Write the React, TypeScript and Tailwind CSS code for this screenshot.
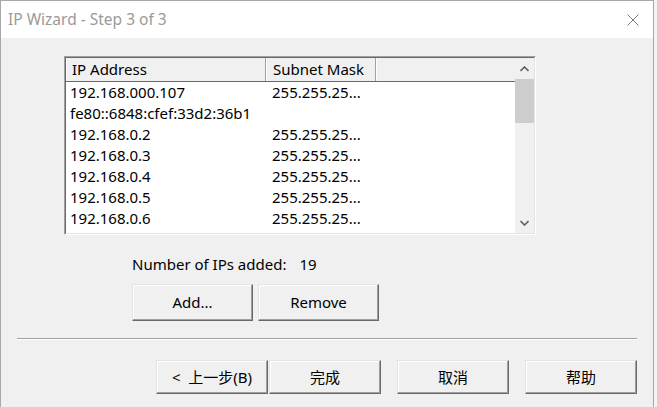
import React from "react";

const rows: [string, string][] = [
  ["192.168.000.107", "255.255.25..."],
  ["fe80::6848:cfef:33d2:36b1", ""],
  ["192.168.0.2", "255.255.25..."],
  ["192.168.0.3", "255.255.25..."],
  ["192.168.0.4", "255.255.25..."],
  ["192.168.0.5", "255.255.25..."],
  ["192.168.0.6", "255.255.25..."],
];

function Btn({ label, className = "" }: { label: string; className?: string }) {
  return (
    <div
      className={
        "flex items-center justify-center bg-[#f0f0f0] border border-t-[#e3e3e3] border-l-[#e3e3e3] border-b-[#696969] border-r-[#696969] shadow-[inset_-1px_-1px_0_#a0a0a0,inset_1px_1px_0_#ffffff] text-[15px] text-black whitespace-pre " +
        className
      }
    >
      {label}
    </div>
  );
}

export default function App() {
  return (
    <div
      className="w-[657px] h-[407px] flex bg-white overflow-hidden"
      style={{ fontFamily: '"Noto Sans", "Noto Sans CJK SC", sans-serif' }}
    >
      <div className="w-[654px] h-full flex flex-col border-l border-r border-t border-[#a8a8a8]">
        {/* title bar */}
        <div className="h-[37px] bg-white flex items-center justify-between pl-[7px] pr-[14px] shrink-0">
          <span className="text-[15.5px] text-[#9a9a9a] leading-none">IP Wizard - Step 3 of 3</span>
          <svg width="12" height="12" viewBox="0 0 12 12" className="mt-[1px]">
            <path d="M0.5 0.5 L11.5 11.5 M11.5 0.5 L0.5 11.5" stroke="#7a7a7a" strokeWidth="1" />
          </svg>
        </div>
        {/* body */}
        <div className="flex-1 bg-[#f0f0f0] flex flex-col">
          {/* list view */}
          <div className="mt-[18px] ml-[63px] w-[472px] h-[179px] shrink-0 border border-t-[#a0a0a0] border-l-[#a0a0a0] border-b-white border-r-white">
            <div className="w-full h-full border border-t-[#696969] border-l-[#696969] border-b-[#e3e3e3] border-r-[#e3e3e3] flex bg-white">
              <div className="flex-1 flex flex-col overflow-hidden">
                {/* header */}
                <div className="h-[24px] flex shrink-0 border-b border-[#696969] bg-[#f0f0f0] text-[15px] text-black">
                  <div className="w-[200px] border-r border-[#a0a0a0] border-l border-l-white flex items-center pl-[5px]">
                    IP Address
                  </div>
                  <div className="w-[110px] border-r border-[#a0a0a0] border-l border-l-white flex items-center pl-[6px]">
                    Subnet Mask
                  </div>
                  <div className="flex-1 border-l border-l-white" />
                </div>
                {rows.map(([ip, mask], i) => (
                  <div key={i} className="h-[21px] flex shrink-0 items-center text-[15px] text-black whitespace-nowrap">
                    <div className="w-[200px] pl-[4px]">{ip}</div>
                    <div className="w-[110px] pl-[6px]">{mask}</div>
                  </div>
                ))}
              </div>
              {/* scrollbar */}
              <div className="w-[19px] bg-[#f0f0f0] flex flex-col shrink-0">
                <div className="h-[21px] flex items-center justify-center">
                  <svg width="9" height="6" viewBox="0 0 9 6">
                    <path d="M0.5 5 L4.5 1 L8.5 5" stroke="#606060" strokeWidth="1.6" fill="none" />
                  </svg>
                </div>
                <div className="h-[44px] bg-[#cdcdcd]" />
                <div className="flex-1" />
                <div className="h-[21px] flex items-center justify-center">
                  <svg width="9" height="6" viewBox="0 0 9 6">
                    <path d="M0.5 1 L4.5 5 L8.5 1" stroke="#606060" strokeWidth="1.6" fill="none" />
                  </svg>
                </div>
              </div>
            </div>
          </div>
          {/* count */}
          <div className="mt-[19px] ml-[131px] h-[20px] flex items-center text-[15px] text-black">
            <span>Number of IPs added:</span>
            <span className="ml-[13px]">19</span>
          </div>
          {/* add/remove */}
          <div className="mt-[10px] ml-[131px] flex gap-[5px]">
            <Btn label="Add..." className="w-[121px] h-[37px]" />
            <Btn label="Remove" className="w-[121px] h-[37px]" />
          </div>
          {/* separator */}
          <div className="mt-[17px] ml-[16px] w-[620px] border-t border-t-[#a0a0a0] border-b border-b-white" />
          {/* bottom buttons */}
          <div className="mt-[20px] ml-[155px] flex">
            <Btn label="<  上一步(B)" className="w-[112px] h-[34px]" />
            <Btn label="完成" className="w-[112px] h-[34px] ml-[1px]" />
            <Btn label="取消" className="w-[112px] h-[34px] ml-[16px]" />
            <Btn label="帮助" className="w-[112px] h-[34px] ml-[16px]" />
          </div>
        </div>
      </div>
      <div className="w-[3px] h-full bg-[#f4f4f4]" />
    </div>
  );
}
